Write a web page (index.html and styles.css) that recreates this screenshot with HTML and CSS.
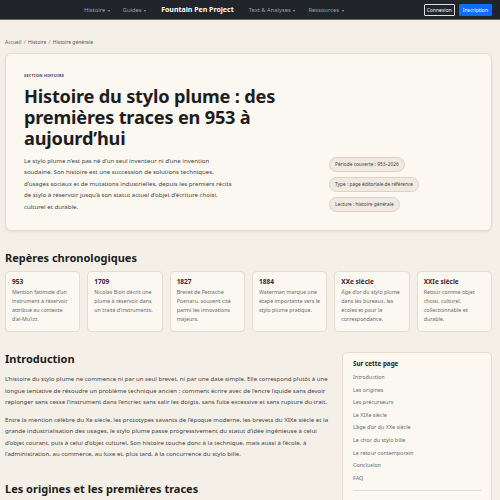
FILE: index.html
```html
<!DOCTYPE html>
<html lang="fr">
<head>
<meta charset="utf-8">
<title>Histoire du stylo plume</title>
<link rel="stylesheet" href="styles.css">
</head>
<body>
<nav class="nav">
  <div class="nav-inner">
    <a class="nav-link">Histoire <span class="caret">▾</span></a>
    <a class="nav-link">Guides <span class="caret">▾</span></a>
    <a class="brand">Fountain Pen Project</a>
    <a class="nav-link">Text &amp; Analyses <span class="caret">▾</span></a>
    <a class="nav-link">Ressources <span class="caret">▾</span></a>
  </div>
  <div class="nav-actions">
    <a class="btn btn-outline">Connexion</a>
    <a class="btn btn-primary">Inscription</a>
  </div>
</nav>
<div class="page">
  <div class="breadcrumb">Accueil <span class="sep">/</span> Histoire <span class="sep">/</span> Histoire générale</div>
  <header class="hero">
    <div class="hero-main">
      <div class="eyebrow">SECTION HISTOIRE</div>
      <h1 class="title">Histoire du stylo plume : des premières traces en 953 à aujourd’hui</h1>
      <p class="lead">Le stylo plume n’est pas né d’un seul inventeur ni d’une invention soudaine. Son histoire est une succession de solutions techniques, d’usages sociaux et de mutations industrielles, depuis les premiers récits de stylo à réservoir jusqu’à son statut actuel d’objet d’écriture choisi, culturel et durable.</p>
    </div>
    <div class="chips">
      <span class="chip">Période couverte : 953–2026</span>
      <span class="chip">Type : page éditoriale de référence</span>
      <span class="chip">Lecture : histoire générale</span>
    </div>
  </header>

  <h2 class="h2 h2-chrono">Repères chronologiques</h2>
  <div class="timeline">
    <div class="tcard"><div class="year">953</div><p>Mention fatimide d’un instrument à réservoir attribué au contexte d’al-Mu’izz.</p></div>
    <div class="tcard"><div class="year">1709</div><p>Nicolas Bion décrit une plume à réservoir dans un traité d’instruments.</p></div>
    <div class="tcard"><div class="year">1827</div><p>Brevet de Petrache Poenaru, souvent cité parmi les innovations majeurs.</p></div>
    <div class="tcard"><div class="year">1884</div><p>Waterman marque une étape importante vers le stylo plume pratique.</p></div>
    <div class="tcard"><div class="year">XXe siècle</div><p>Âge d’or du stylo plume dans les bureaux, les écoles et pour la correspondance.</p></div>
    <div class="tcard"><div class="year">XXIe siècle</div><p>Retour comme objet choisi, culturel, collectionnable et durable.</p></div>
  </div>

  <div class="layout">
    <main class="content">
      <h2 class="h2 h2-intro">Introduction</h2>
      <p class="text">L’histoire du stylo plume ne commence ni par un seul brevet, ni par une date simple. Elle correspond plutôt à une longue tentative de résoudre un problème technique ancien : comment écrire avec de l’encre liquide sans devoir replonger sans cesse l’instrument dans l’encrier, sans salir les doigts, sans fuite excessive et sans rupture du trait.</p>
      <p class="text">Entre la mention célèbre du Xe siècle, les prototypes savants de l’époque moderne, les brevets du XIXe siècle et la grande industrialisation des usages, le stylo plume passe progressivement du statut d’idée ingénieuse à celui d’objet courant, puis à celui d’objet culturel. Son histoire touche donc à la technique, mais aussi à l’école, à l’administration, au commerce, au luxe et, plus tard, à la concurrence du stylo bille.</p>
      <h2 class="h2 h2-origins">Les origines et les premières traces</h2>
    </main>
    <aside class="toc">
      <div class="toc-title">Sur cette page</div>
      <ul class="toc-list">
        <li>Introduction</li>
        <li>Les origines</li>
        <li>Les précurseurs</li>
        <li>Le XIXe siècle</li>
        <li>L’âge d’or du XXe siècle</li>
        <li>Le choc du stylo bille</li>
        <li>Le retour contemporain</li>
        <li>Conclusion</li>
        <li>FAQ</li>
      </ul>
      <div class="toc-rule"></div>
    </aside>
  </div>
</div>
</body>
</html>
```

FILE: styles.css
```css
* { box-sizing: border-box; }
html, body { margin: 0; padding: 0; }
body {
  background: #f4f0e8;
  font-family: "Noto Sans", "Open Sans", sans-serif;
  color: #2b2b2b;
  height: 500px;
  overflow: hidden;
}
a { text-decoration: none; }
.nav {
  height: 20px;
  background: #212529;
  border-bottom: 1px solid #6e675e;
  display: flex;
  align-items: center;
  padding: 0 8px 0 84px;
}
.nav-inner {
  display: flex;
  align-items: center;
  gap: 13px;
  flex: 1;
}
.nav-link {
  color: #9aa0a8;
  font-size: 5.8px;
}
.caret { font-size: 4px; margin-left: 1px; }
.brand {
  color: #ffffff;
  font-weight: 700;
  font-size: 7px;
  margin: 0 2px;
}
.nav-actions { display: flex; gap: 4px; }
.btn {
  font-size: 5px;
  height: 12px;
  display: flex;
  align-items: center;
  padding: 0 2px;
  border-radius: 1px;
}
.btn-outline { border: 1px solid #dee2e6; color: #ffffff; }
.btn-primary { background: #0d6efd; color: #ffffff; border: 1px solid #0d6efd; padding: 0 3px; }

.page { width: 487px; margin-left: 5px; }
.breadcrumb {
  font-size: 5px;
  color: #555;
  padding-top: 19px;
  height: 33px;
}
.sep { color: #777; margin: 0 1px; }

.hero {
  background: #fbf8f2;
  border: 1px solid #e4dccf;
  border-radius: 6px;
  box-shadow: 0 1px 2px rgba(120, 100, 70, 0.12);
  padding: 19px 18px 18px 18px;
  display: flex;
  align-items: flex-end;
  justify-content: space-between;
  height: 178px;
}
.hero-main { width: 290px; }
.eyebrow {
  font-size: 4px;
  font-weight: 700;
  color: #5a3b58;
  letter-spacing: 0.2px;
  margin-bottom: 8px;
}
.title {
  font-size: 18.2px;
  line-height: 21px;
  font-weight: 700;
  margin: 0 0 6px 0;
  color: #1d1d1d;
  letter-spacing: -0.2px;
}
.lead {
  font-size: 6.1px;
  line-height: 11.5px;
  color: #444;
  margin: 0;
  width: 210px;
}
.chips {
  display: flex;
  flex-direction: column;
  align-items: flex-start;
  gap: 5px;
  width: 144px;
  margin-bottom: 0;
}
.chip {
  font-size: 4.8px;
  color: #444;
  background: #f0e9e0;
  border: 1px solid #ddd2c2;
  border-radius: 8px;
  padding: 3px 5px;
  line-height: 7px;
}

.h2 { font-weight: 700; color: #1d1d1d; margin: 0; font-size: 11px; line-height: 14px; }
.h2-chrono { margin-top: 20px; margin-bottom: 6px; }
.timeline {
  display: grid;
  grid-template-columns: repeat(6, 1fr);
  gap: 7px;
}
.tcard {
  background: #fbf8f2;
  border: 1px solid #e4dccf;
  border-radius: 4px;
  padding: 5px 6px 6px 6px;
  height: 61px;
}
.year { font-size: 6.5px; font-weight: 700; color: #3e2238; margin-bottom: 2px; }
.tcard p { margin: 0; font-size: 5.3px; line-height: 9px; color: #6a6a6a; }

.layout {
  display: flex;
  gap: 10px;
  margin-top: 20px;
  align-items: flex-start;
}
.content { flex: 1; }
.h2-intro { margin-bottom: 7px; }
.text {
  font-size: 6.1px;
  line-height: 11.5px;
  color: #444;
  margin: 0 0 6px 0;
}
.h2-origins { margin-top: 22px; }
.toc {
  width: 150px;
  background: #fbf8f2;
  border: 1px solid #e4dccf;
  border-radius: 5px;
  padding: 6px 10px 10px 10px;
  height: 200px;
}
.toc-title { font-size: 6.3px; font-weight: 700; color: #222; margin-bottom: 3px; }
.toc-list { list-style: none; margin: 0; padding: 0; }
.toc-list li { font-size: 5.4px; color: #6a6a6a; line-height: 12.6px; }
.toc-rule { border-top: 1px solid #e0d8ca; margin-top: 6px; }
```
